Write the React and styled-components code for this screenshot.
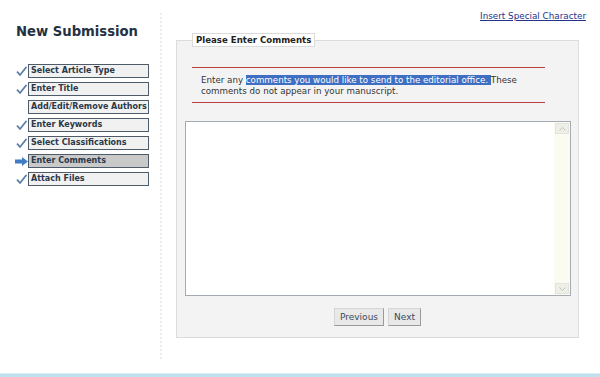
import React from 'react';
import styled, { createGlobalStyle } from 'styled-components';

const GlobalStyle = createGlobalStyle`
  html, body {
    margin: 0;
    padding: 0;
    background: #ffffff;
    font-family: 'DejaVu Sans', Verdana, sans-serif;
  }
`;

const STEPS = [
  { label: 'Select Article Type', status: 'done' },
  { label: 'Enter Title', status: 'done' },
  { label: 'Add/Edit/Remove Authors', status: 'none' },
  { label: 'Enter Keywords', status: 'done' },
  { label: 'Select Classifications', status: 'done' },
  { label: 'Enter Comments', status: 'current' },
  { label: 'Attach Files', status: 'done' },
];

function Check() {
  return (
    <svg width="11" height="11" viewBox="0 0 11 11">
      <path d="M1.5 6.2 L4 9 L10 1.5" fill="none" stroke="#5b7fa6" strokeWidth="1.8" strokeLinecap="round" strokeLinejoin="round" />
    </svg>
  );
}

function Arrow() {
  return (
    <svg width="13" height="9" viewBox="0 0 13 9">
      <polygon points="0,2.5 7,2.5 7,0 13,4.5 7,9 7,6.5 0,6.5" fill="#3f7cc4" />
    </svg>
  );
}

export default function App() {
  return (
    <>
      <GlobalStyle />
      <Page>
        <Columns>
          <Sidebar>
            <Title>New Submission</Title>
            <StepList>
              {STEPS.map((step) => (
                <StepRow key={step.label}>
                  <StepIcon>
                    {step.status === 'done' && <Check />}
                    {step.status === 'current' && <Arrow />}
                  </StepIcon>
                  <StepBox $current={step.status === 'current'}>{step.label}</StepBox>
                </StepRow>
              ))}
            </StepList>
          </Sidebar>
          <Main>
            <LinkRow>
              <SpecialLink href="#">Insert Special Character</SpecialLink>
            </LinkRow>
            <Panel>
              <Legend>Please Enter Comments</Legend>
              <Notice>
                Enter any <Selected>comments you would like to send to the editorial office. </Selected>These
                <br />
                comments do not appear in your manuscript.
              </Notice>
              <TextBox>
                <CommentArea />
                <ScrollBar>
                  <ScrollButton>
                    <svg width="7" height="4" viewBox="0 0 7 4">
                      <path d="M0.5 3.5 L3.5 0.5 L6.5 3.5" fill="none" stroke="#c4c4bc" strokeWidth="1" />
                    </svg>
                  </ScrollButton>
                  <ScrollButton>
                    <svg width="7" height="4" viewBox="0 0 7 4">
                      <path d="M0.5 0.5 L3.5 3.5 L6.5 0.5" fill="none" stroke="#c4c4bc" strokeWidth="1" />
                    </svg>
                  </ScrollButton>
                </ScrollBar>
              </TextBox>
              <ButtonRow>
                <NavButton>Previous</NavButton>
                <NavButton>Next</NavButton>
              </ButtonRow>
            </Panel>
          </Main>
        </Columns>
        <FooterBar />
      </Page>
    </>
  );
}

const Page = styled.div`
  width: 600px;
  height: 377px;
  display: flex;
  flex-direction: column;
  overflow: hidden;
`;

const Columns = styled.div`
  flex: 1;
  display: flex;
`;

const Sidebar = styled.div`
  width: 162px;
  height: 346px;
  margin-top: 13px;
  border-right: 2px dotted #ececec;
  box-sizing: border-box;
  padding: 10px 0 0 16px;
`;

const Title = styled.h1`
  margin: 0;
  font-size: 13.2px;
  font-weight: bold;
  color: #233142;
  line-height: 18px;
`;

const StepList = styled.div`
  margin-top: 23px;
  display: flex;
  flex-direction: column;
  gap: 4px;
`;

const StepRow = styled.div`
  display: flex;
  align-items: center;
`;

const StepIcon = styled.div`
  width: 14px;
  height: 14px;
  margin-left: -2px;
  display: flex;
  align-items: center;
  justify-content: center;
`;

const StepBox = styled.div`
  width: 121px;
  height: 14px;
  box-sizing: border-box;
  border: 1px solid #4e5c6a;
  background: ${(p) => (p.$current ? '#c9c9c9' : '#f1f1f1')};
  color: #2a3848;
  font-size: 8px;
  font-weight: bold;
  line-height: 12px;
  padding-left: 2px;
  white-space: nowrap;
  overflow: hidden;
`;

const Main = styled.div`
  flex: 1;
  padding: 0 13px 0 14px;
  display: flex;
  flex-direction: column;
`;

const LinkRow = styled.div`
  height: 33px;
  display: flex;
  justify-content: flex-end;
  align-items: flex-start;
  padding-top: 11px;
  box-sizing: border-box;
`;

const SpecialLink = styled.a`
  font-size: 8.8px;
  color: #24338a;
  text-decoration: underline;
  margin-right: 1px;
`;

const Panel = styled.fieldset`
  width: 403px;
  margin: 0;
  padding: 0 0 11px 0;
  border: 1px solid #dcdcdc;
  background: #f3f3f3;
  box-sizing: border-box;
  display: flex;
  flex-direction: column;
`;

const Legend = styled.legend`
  margin-left: 15px;
  padding: 0 3px;
  height: 14px;
  box-sizing: border-box;
  border: 1px solid #dadada;
  background: #ffffff;
  font-size: 8.6px;
  font-weight: bold;
  color: #222222;
  line-height: 12px;
`;

const Notice = styled.div`
  margin: 20px 33px 0 15px;
  padding: 7px 9px 5px;
  border-top: 1px solid #b84040;
  border-bottom: 1px solid #b84040;
  font-size: 8.7px;
  line-height: 11px;
  color: #333333;
  white-space: nowrap;
`;

const Selected = styled.span`
  background: #3e6fc2;
  color: #ffffff;
`;

const TextBox = styled.div`
  margin: 18px 7px 0 8px;
  height: 173px;
  display: flex;
  border: 1px solid #a4abb3;
  background: #ffffff;
`;

const CommentArea = styled.textarea`
  flex: 1;
  border: none;
  outline: none;
  resize: none;
  background: #ffffff;
  font-family: 'DejaVu Sans', Verdana, sans-serif;
  font-size: 8px;
`;

const ScrollBar = styled.div`
  width: 16px;
  background: #fbfbf2;
  display: flex;
  flex-direction: column;
  justify-content: space-between;
  align-items: center;
  padding: 1px 0;
`;

const ScrollButton = styled.div`
  width: 14px;
  height: 11px;
  background: #efefe9;
  border: 1px solid #e4e4dc;
  box-sizing: border-box;
  display: flex;
  align-items: center;
  justify-content: center;
`;

const ButtonRow = styled.div`
  margin-top: 12px;
  display: flex;
  justify-content: center;
  gap: 4px;
`;

const NavButton = styled.button`
  height: 18px;
  padding: 0 5px;
  font-family: 'DejaVu Sans', Verdana, sans-serif;
  font-size: 9px;
  color: #3c4a5c;
  background: #e8e8e8;
  border: 1px solid #d6d6d6;
  border-right-color: #9a9a9a;
  border-bottom-color: #9a9a9a;
  box-sizing: border-box;
`;

const FooterBar = styled.div`
  height: 3px;
  background: #bfe0ec;
  border-top: 1px solid #d9eff6;
`;
